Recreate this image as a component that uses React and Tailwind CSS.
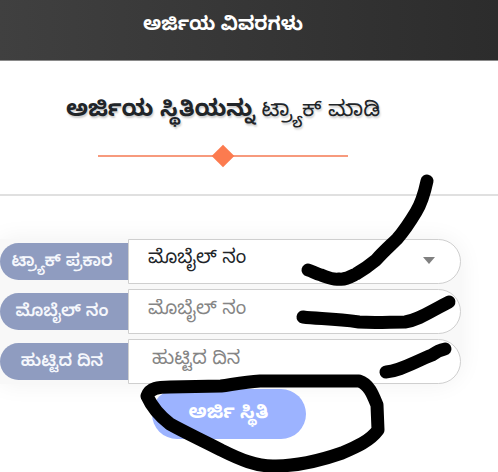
import { useState } from 'react'

const ROW_LABEL = 'flex h-[37px] w-32 shrink-0 items-center justify-center rounded-l-full bg-[#8f9cc0] pt-1 pr-1 text-[17px] leading-8 font-semibold whitespace-nowrap text-[#f5f7fc]'
const ROW_FIELD = 'block h-[45px] w-full min-w-0 rounded-r-full border border-[#cfcfcf] bg-white pr-8 text-[19px] outline-none'

function FormRow({ id, label, children }) {
  return (
    <div className="flex items-center">
      <label htmlFor={id} className={ROW_LABEL}>{label}</label>
      <div className="relative min-w-0 flex-1">{children}</div>
    </div>
  )
}

// Freehand marker strokes lying over the form
function MarkerStrokes() {
  return (
    <svg
      className="pointer-events-none absolute top-0 left-0"
      width="498"
      height="472"
      viewBox="0 0 498 472"
      fill="none"
      stroke="#000"
      strokeWidth="13"
      strokeLinecap="round"
      strokeLinejoin="round"
      aria-hidden="true"
    >
      <path d="M308 270 C312 271 316 274 321 275 C327 277 332 280 339 279 C345 280 350 277 356 274 C363 270 370 265 376 260 C384 251 391 245 397 239 C404 231 410 222 416 212 C421 204 424 195 427 181" />
      <path d="M303 317 C318 319 333 318 359 322 C375 323 390 322 405 322 C419 320 431 311 449 302" />
      <path d="M386 372 C400 371 414 362 432 355 C436 352 440 350 445 349" />
      <path d="M147 396 C150 388 158 387 170 387 L221 386 C235 384 245 382 260 381 L359 381 C369 384 373 395 377 405 L378 430 C370 441 356 447 342 453 C319 461 299 466 276 466 C257 467 239 459 221 450 C204 441 186 433 170 424 C157 414 151 405 147 396 Z" />
    </svg>
  )
}

function App() {
  const [trackType, setTrackType] = useState('mobile')
  const [mobile, setMobile] = useState('')
  const [birthDate, setBirthDate] = useState('')

  return (
    <div className="relative min-h-screen overflow-hidden bg-white font-['Noto_Sans_Kannada','Noto_Sans',sans-serif] text-[#212529]">
      <header className="flex h-[61px] items-center justify-center border-b border-[#8a8a8a] bg-linear-to-r from-[#404040] to-[#2c2c2c] pr-[52px] pb-1">
        <h1 className="text-[19px] font-bold text-white">ಅರ್ಜಿಯ ವಿವರಗಳು</h1>
      </header>

      <main>
        <section className="flex h-[135px] flex-col items-center border-b-2 border-[#e0e0e0] pt-9 pr-[52px]">
          <h2 className="text-[22px] leading-8 whitespace-nowrap [text-shadow:1px_2px_2px_rgba(0,0,0,0.2)]">
            <b className="text-[23px]">ಅರ್ಜಿಯ ಸ್ಥಿತಿಯನ್ನು</b> ಟ್ರ್ಯಾಕ್ ಮಾಡಿ
          </h2>
          <div className="mt-4 flex h-[22px] w-[250px] items-center">
            <span className="h-[2px] flex-1 bg-[#f79a7d]" />
            <span className="size-4 rotate-45 bg-[#fc7b4f]" />
            <span className="h-[2px] flex-1 bg-[#f79a7d]" />
          </div>
        </section>

        <form className="pt-[43px] pr-[37px]" onSubmit={(e) => e.preventDefault()}>
          <div className="flex flex-col gap-[5px] rounded-r-3xl bg-[#f8f8f8] shadow-[0_0_24px_rgba(0,0,0,0.06)]">
            <FormRow id="track-type" label="ಟ್ರ್ಯಾಕ್ ಪ್ರಕಾರ">
              <select
                id="track-type"
                value={trackType}
                onChange={(e) => setTrackType(e.target.value)}
                className={`${ROW_FIELD} appearance-none pl-[19px]`}
              >
                <option value="mobile">ಮೊಬೈಲ್ ನಂ</option>
              </select>
              <svg className="pointer-events-none absolute top-[18px] right-[26px]" width="12" height="7" viewBox="0 0 12 7" aria-hidden="true">
                <path d="M0 0h12L6 7z" fill="#808080" />
              </svg>
            </FormRow>
            <FormRow id="mobile-no" label="ಮೊಬೈಲ್ ನಂ">
              <input
                id="mobile-no"
                type="text"
                placeholder="ಮೊಬೈಲ್ ನಂ"
                value={mobile}
                onChange={(e) => setMobile(e.target.value)}
                className={`${ROW_FIELD} pl-[19px] placeholder:text-[#858585]`}
              />
            </FormRow>
            <FormRow id="birth-date" label="ಹುಟ್ಟಿದ ದಿನ">
              <input
                id="birth-date"
                type="text"
                placeholder="ಹುಟ್ಟಿದ ದಿನ"
                value={birthDate}
                onChange={(e) => setBirthDate(e.target.value)}
                className={`${ROW_FIELD} pl-[23px] placeholder:text-[#858585]`}
              />
            </FormRow>
          </div>
          <div className="flex justify-center pt-[5px] pr-1">
            <button type="submit" className="h-[50px] w-[154px] rounded-full bg-[#9cb3ff] pt-1 text-[19px] font-bold text-white">
              ಅರ್ಜಿ ಸ್ಥಿತಿ
            </button>
          </div>
        </form>
      </main>

      <MarkerStrokes />
    </div>
  )
}

export default App
